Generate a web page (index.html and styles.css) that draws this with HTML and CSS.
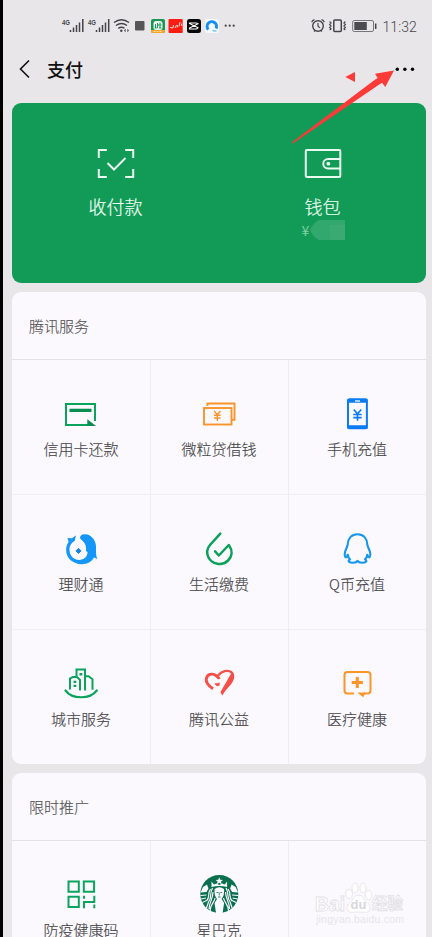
FILE: index.html
```html
<!DOCTYPE html>
<html lang="zh-CN">
<head>
<meta charset="utf-8">
<title>支付</title>
<link rel="stylesheet" href="styles.css">
</head>
<body>
<div class="screen">
  <div class="status">
    <svg class="status-left" width="180" height="24" viewBox="60 14 180 24">
      <g class="net"><text x="62" y="24.500" textLength="8" lengthAdjust="spacingAndGlyphs">4G</text><text x="88" y="24.500" textLength="8" lengthAdjust="spacingAndGlyphs">4G</text></g>
      <g stroke="#444347" stroke-width="1.500">
        <path d="M70.500 32v-2M73.500 32v-4.500M76.500 32v-7M79.500 32v-9.500M82.800 32v-13"/>
        <path d="M96.500 32v-2M99.500 32v-4.500M102.500 32v-7M105.500 32v-9.500M108.700 32v-13"/>
      </g>
      <g fill="none" stroke="#444347" stroke-width="1.400">
        <path d="M114 22.500q7.500-5.500 15 0M116 25.500q5.500-4 11 0M118.300 28.300q3.200-2.200 6.200 0"/>
      </g>
      <circle cx="121.300" cy="30.800" r="1.200" fill="#444347"/>
      <path d="M124 30.500l1.600-1.800v3.600zM129 30.500l-1.600-1.800v3.600z" fill="#444347"/>
      <rect x="135" y="21" width="9.500" height="9.500" rx="1" fill="#565558"/>
      <rect x="151" y="19" width="14" height="14" rx="2" fill="#1b9652"/>
      <path d="M151 30h14v1q0 2-2 2h-10q-2 0-2-2z" fill="#f5a52c"/>
      <rect x="153.500" y="21" width="9" height="9" rx="2.500" fill="#e9f8ee"/>
      <path d="M155.500 24v4M157.500 23v5M160 22.500v5.500M158 25h3.500M154.800 28h2M159 28h2.500" stroke="#1b9652" fill="none"/>
      <path d="M153.500 31.500h9" stroke="#fff3cd" stroke-width=".8" stroke-dasharray="2 1"/>
      <rect x="168.500" y="19" width="14.200" height="14" rx="1" fill="#fb1c12"/>
      <path d="M170 27.500l3 .5.500-3M175 28l1.500-3M177 27.500l.8-2.500M179 26.500l1-4.500M181 23.500l1 2.500" stroke="#ffd5d1" fill="none"/>
      <rect x="187" y="19" width="14" height="14" rx="2.500" fill="#08080a"/>
      <path d="M198.500 23.500l-9 4.500v1h7q1 0 1-1.200M189.500 23.500l9 4.500M189.500 24v-1h7q1 0 1 1" stroke="#fff" stroke-width="1.200" fill="none"/>
      <rect x="205" y="19" width="14" height="14" rx="2.500" fill="#f3f9fe"/>
      <path d="M208.300 29.500a4.700 4.700 0 1 1 7.700-1" stroke="#168df0" stroke-width="3" fill="none"/>
      <path d="M212.500 30q1.500 1.500 4 .8" stroke="#7cc9fa" stroke-width="1.500" fill="none"/>
      <g fill="#444347"><circle cx="225.700" cy="25.700" r="1.100"/><circle cx="229.700" cy="25.700" r="1.100"/><circle cx="233.700" cy="25.700" r="1.100"/></g>
    </svg>
    <div class="status-right">
      <svg width="68" height="20" viewBox="310 16 68 20" fill="none" stroke="#444347">
        <circle cx="319" cy="26" r="5.300" stroke-width="1.400"/>
        <path d="M319 23v3.200l2 1.700M312.700 22.300q.7-2.200 2.800-2.700M325.300 22.300q-.7-2.200-2.800-2.700M315 31.500l1.200-1.300M323 31.500l-1.200-1.300" stroke-width="1.200"/>
        <rect x="334.800" y="20" width="7.500" height="11.500" rx="1" stroke-width="1.500"/>
        <path d="M330.600 21.500l1.500 1.500-1.500 1.500 1.500 1.500-1.500 1.500 1.500 1.500-1.500 1M346.400 21.500l-1.500 1.500 1.500 1.500-1.500 1.500 1.500 1.500-1.500 1.500 1.500 1" stroke-width="1.100"/>
        <rect x="353.700" y="20.500" width="20.800" height="11" rx="1.500" stroke="#77767a"/>
        <path d="M355.300 22h12.500v8h-12.500z" fill="#4c4b4f" stroke="none"/>
        <path d="M376.700 23.500v5.500" stroke-width="1.500"/>
      </svg>
      <span class="clock">11:32</span>
    </div>
  </div>

  <header class="nav">
    <svg width="12" height="20" viewBox="0 0 12 20" fill="none" stroke="#111" stroke-width="1.600"><path d="M11 1.500L2.500 10l8.500 8.500"/></svg>
    <h1>支付</h1>
    <svg class="more" width="20" height="6" viewBox="0 0 20 6"><circle cx="2.300" cy="3.200" r="1.700"/><circle cx="9.900" cy="3.200" r="1.700"/><circle cx="17.500" cy="3.200" r="1.700"/></svg>
  </header>

  <main>
    <section class="hero">
      <div class="hero-item">
        <svg class="icon" viewBox="0 0 40 40" fill="none" stroke="#e9faf0" stroke-width="2">
          <path d="M2.800 15V7h8M29.200 7h8v8M37.200 26v8h-8M10.800 34h-8v-8"/><path d="M11.500 20l6.500 6.500L29.500 15"/>
        </svg>
        <span class="hero-label">收付款</span>
      </div>
      <div class="hero-item">
        <svg class="icon" viewBox="0 0 40 40" fill="none" stroke="#e9faf0" stroke-width="2">
          <rect x="2.800" y="7" width="34.500" height="27" rx="1"/><path d="M37 16H25a4.700 4.700 0 0 0 0 9.500h12"/><circle cx="25.300" cy="20.700" r="1.900" fill="#e9faf0" stroke="none"/>
        </svg>
        <span class="hero-label">钱包</span>
        <div class="balance"><span>¥</span><svg width="35" height="20" viewBox="0 0 35 20"><path d="M9 0h26v20H9Q3 17 0 10 3 3 9 0z" fill="#32a86e"/><path d="M20 5h15v15H20z" fill="#3aaa72"/></svg></div>
      </div>
    </section>

    <section class="card">
      <h2>腾讯服务</h2>
      <div class="grid">
        <div class="cell">
          <svg class="icon" viewBox="0 0 40 40"><path d="M34 27V10H5v21h22" fill="none" stroke="#0aa35c" stroke-width="2"/><path d="M8.500 14.700h22v3.200h-22z" fill="#078d4d"/><path d="M26.300 25.300L35 32h-8.700z" fill="#078d4d"/></svg>
          <span>信用卡还款</span>
        </div>
        <div class="cell">
          <svg class="icon" viewBox="0 0 40 40" fill="none" stroke="#fa9429" stroke-width="1.900"><rect x="5" y="14" width="27.500" height="16.500"/><path d="M8.500 12V9.500h27v16.300H33"/><path d="M15.200 17l3.100 3.700 3.100-3.700M18.300 20.700V27M15 21.300h6.600M15 24h6.600" stroke-width="1.400"/></svg>
          <span>微粒贷借钱</span>
        </div>
        <div class="cell">
          <svg class="icon" viewBox="0 0 40 40" fill="none" stroke="#0b7bf5"><rect x="11" y="5.300" width="18.900" height="29" rx="1.500" stroke-width="2"/><path d="M10.500 7h20M10.500 33h20" stroke-width="3.500"/><path d="M18 7h5" stroke="#d9ecff" stroke-width="1.500"/><path d="M16.700 15.500l3.800 4.300 3.800-4.300M20.500 19.800v7M16.300 20.500h8.400M16.300 23.600h8.400" stroke-width="1.600"/></svg>
          <span>手机充值</span>
        </div>
        <div class="cell">
          <svg class="icon" viewBox="0 0 40 40"><path d="M6.500 9l4.500.3L15.500 6 20 7.500q5-4 9.500-.5c4 3 6 7.500 5.500 13 0 4 0 7 1.300 10l-3.300-1.500C30.500 33 26 35.300 20.700 35.200 12 35 5.200 29.500 5.100 21c0-3.500 1-6 2.500-8z" fill="#1496fa"/><path d="M15.500 3.500l-1.700 8.200c-4 2.500-5.800 6-5.200 10.500.7 5.300 4.700 8.800 9.500 8.700 4.700-.1 8.300-3.200 8.500-7.700l-1.700-1.500c1-5-1.400-8.700-5.600-12V3.500z" fill="#fbf9fd"/><path d="M19.500 9q-.5-3 3-3.800L28 7l-5 6z" fill="#1496fa"/><path d="M17.500 19.300l2.500 2.600-2.500 2.600-2.500-2.600z" fill="#1685e0" stroke="#1685e0"/></svg>
          <span>理财通</span>
        </div>
        <div class="cell">
          <svg class="icon" viewBox="0 0 40 40" fill="none" stroke="#0ba15b" stroke-width="2.500" stroke-linejoin="round" stroke-linecap="round"><path d="M21.300 4.700L11 16C8 19.500 7.500 24 9.300 28c3.300 7.300 14 9.300 19.800 3.500 4.200-4.200 4.700-10 .7-15.500l-10 10.500-3.700-4.200"/></svg>
          <span>生活缴费</span>
        </div>
        <div class="cell">
          <svg class="icon" viewBox="0 0 40 40" fill="none" stroke="#1496ee" stroke-width="2.100" stroke-linejoin="round"><path d="M20.500 5.200c-6 0-9.700 4.300-9.800 10.300 0 2.200-2.900 5.500-3 9.500 0 3 1 4.500 2.300 2.500l.8-1.700c.3 2.200 1.300 3.700 2.200 4.500-3 1.700-.7 3.500 3 3.500 2.200 0 3.700-.6 4.500-2 .8 1.400 2.300 2 4.500 2 3.700 0 6-1.800 3-3.500.9-.8 1.900-2.300 2.200-4.500l.8 1.700c1.300 2 2.300.5 2.300-2.500-.1-4-3-7.300-3-9.500-.1-6-3.800-10.300-9.800-10.300z"/></svg>
          <span>Q币充值</span>
        </div>
        <div class="cell">
          <svg class="icon" viewBox="0 0 40 40" fill="none" stroke="#0ba45d" stroke-width="2"><path d="M9 25.500V14.300l3-1.300h4l3 3v10.500M15.500 13V5.500H24v21M24 12.300h3.500l4 3v10.500"/><path d="M4.500 26.500c6.500 9 24.500 9 31.300 0" stroke-linecap="round" stroke-width="2.200"/><path d="M12.500 16.800h2.800v2.200h-2.800zM12.500 20.800h2.800v2.200h-2.800zM18.500 9h2.800v2.500h-2.800z" fill="#0ba45d" stroke="none"/></svg>
          <span>城市服务</span>
        </div>
        <div class="cell">
          <svg class="icon" viewBox="0 0 40 40" fill="none" stroke="#f64f48"><path d="M14 24.800C9 21.500 6.800 18.700 7.300 15c.6-4.700 6-6.200 9.700-3.500 1.500 1 2.600 2 3.300 3.500" stroke-width="2.900"/><path d="M19 11.500C22.500 7 29 5.500 32.500 8.300c3.300 3 .8 8.700-2.500 12.200-2.500 2.700-5 4.500-6.800 8.500" stroke-width="2.400"/><path d="M33 8c3.500 4.500 1.500 9-1.500 12.700-3 3.700-6.500 6.500-8.200 11L21.500 28z" fill="#f64f48" stroke="none"/><path d="M16 19l2.500.3 2-1 .2 3.200-2.600.7-1.800-1.200z" fill="#f64f48" stroke="none"/></svg>
          <span>腾讯公益</span>
        </div>
        <div class="cell">
          <svg class="icon" viewBox="0 0 40 40" fill="none" stroke="#fb952a" stroke-width="2"><path d="M17 29.500h-6.500q-3-.2-3-3V11q0-3 3-3h20q3 0 3 3v15.500q0 3-3 3H27"/><path d="M20.300 28.500h8.200l-2.300 4.800z" fill="#fb952a" stroke="none"/><path d="M20.300 13v11M14.700 18.500h11.200" stroke-width="3"/></svg>
          <span>医疗健康</span>
        </div>
      </div>
    </section>

    <section class="card promo">
      <h2>限时推广</h2>
      <div class="grid">
        <div class="cell">
          <svg class="icon" viewBox="0 0 40 40" fill="none" stroke="#0ba45d" stroke-width="2"><path d="M7.500 6.500h10.300v10.300H7.500zM22.800 6.500h10.300v10.300H22.800zM7.500 21.800h10.300v10.300H7.500z"/><path d="M23 20.800v3M23 26v7.200M33.300 20.800v7M33.300 29.500v3.700M23 27h11"/></svg>
          <span>防疫健康码</span>
        </div>
        <div class="cell">
          <svg class="icon" viewBox="0 0 40 40"><circle cx="20.300" cy="19" r="19" fill="#096f4c"/><g fill="#fbf9fd"><path d="M20.300 2.200l1.100 2.500 2.600.2-2 1.700.7 2.600-2.400-1.400-2.400 1.400.7-2.600-2-1.700 2.600-.2zM12.500 6.500l2.500 3 2.500-1 2.800 1.500 2.800-1.500 2.500 1 2.500-3v5.500q-7.500-2-15.600 0zM4 12l4-2.500 1.500 4L7.500 17l-6 .5zM36.600 12l-4-2.500-1.500 4 2 3.500 6 .5z"/><path d="M15.500 14q4.800-3.500 9.600 0c.2 5-.6 8-2.500 10l2.500 4-1.500 10h-6.600l-1.500-10 2.500-4c-1.900-2-2.700-5-2.500-10z"/></g><g fill="none" stroke="#fbf9fd" stroke-width="1.200"><path d="M13.500 13c-3.500 6.500 0 9-4 14l-2 6M11.500 14c-3.500 5 0 8-4 12M16 23c0 4-5 6-5 13M14 17c0 8-4 10-4 17M27.100 13c3.500 6.500 0 9 4 14l2 6M29.100 14c3.500 5 0 8 4 12M24.600 23c0 4 5 6 5 13M26.600 17c0 8 4 10 4 17"/><path d="M1.500 20.500l6-.5M2 24l5-1M3.500 27.500l4-2M39.100 20.500l-6-.5M38.600 24l-5-1M37.100 27.500l-4-2"/></g><path d="M17.500 17.500h2M21.200 17.500h2M20.300 17.500v3M19 22h2.600" fill="none" stroke="#096f4c" stroke-width=".8"/></svg>
          <span>星巴克</span>
        </div>
        <div class="cell"></div>
      </div>
    </section>
  </main>

  <svg class="arrow" width="104" height="76" viewBox="291 69 104 76" fill="#fc3a38"><path d="M292 142.200L374.500 80l3.200-2-2.700-4.300 19-3.200-8.700 16.500-3.300-4.300-3.500 2.300L292.800 143.500z"/><path d="M345.300 77l9.700-5v10z"/></svg>

  <svg class="watermark" width="96" height="48" viewBox="312 880 96 48">
    <g class="mark">
      <text x="315" y="911" font-size="20" textLength="30" lengthAdjust="spacingAndGlyphs">Bai</text>
      <path d="M347 908c0-5 5-6 6-9 2-5 9-5 11 0 1 3 6 4 6 9 0 6-6 4-11.500 4S347 914 347 908z"/>
      <ellipse cx="349" cy="894" rx="3.300" ry="4.500"/><ellipse cx="355" cy="888" rx="3" ry="4.700"/><ellipse cx="363" cy="888" rx="3" ry="4.700"/><ellipse cx="368.500" cy="895" rx="3.300" ry="4.500"/>
      <text x="372" y="909" font-size="15.500" textLength="31" class="cjk">经验</text>
    </g>
    <text x="350.500" y="909" class="du">du</text>
    <text x="316" y="923" class="url" textLength="88">jingyan.baidu.com</text>
  </svg>
</div>
</body>
</html>
```
FILE: styles.css
```css
* { box-sizing: border-box; }

html, body { margin: 0; height: 937px; overflow: hidden; }

body { font-family: "Noto Sans CJK SC", sans-serif; font-weight: 300; }

.screen {
  position: relative;
  width: 432px;
  height: 937px;
  overflow: hidden;
  border-left: 3px solid #000;
  background: #e8e6e9;
  color: #454448;
}

svg { display: block; flex: none; }

.status {
  display: flex;
  justify-content: space-between;
  align-items: center;
  height: 52px;
  padding: 0 15px 0 57px;
}

.net { font: 700 7.5px "Liberation Sans", sans-serif; fill: #444347; }

.status-right { display: flex; align-items: center; gap: 5px; }

.clock { font: 300 14px/20px Roboto, sans-serif; letter-spacing: .1px; white-space: nowrap; padding-top: 1px; }

.nav {
  display: flex;
  align-items: center;
  height: 51px;
  padding: 0 17px 17px 15px;
}

.nav h1 {
  margin: -1px 0 0 17px;
  font-size: 18px;
  line-height: 26px;
  font-weight: 500;
  color: #111;
}

.more { margin-left: auto; }

main { display: flex; flex-direction: column; gap: 9px; padding: 0 6px 0 9px; }

.hero {
  display: grid;
  grid-template-columns: 1fr 1fr;
  height: 180px;
  padding-top: 40px;
  border-radius: 9px;
  background: #129b57;
}

.hero-item { display: flex; flex-direction: column; align-items: center; }

.icon { width: 40px; height: 40px; }

.hero-label {
  margin: 10px 0 1px;
  font-size: 18px;
  line-height: 26px;
  color: #effcf4;
  -webkit-text-stroke: .2px #effcf4;
}

.balance {
  display: flex;
  align-items: center;
  gap: 1px;
  height: 20px;
  padding-left: 2px;
  font-size: 14px;
  font-weight: 400;
  color: #84cda5;
}

.card { border-radius: 9px; background: #fbf9fd; overflow: hidden; flex: none; }

.card h2 {
  height: 68px;
  margin: 0;
  padding-left: 17px;
  border-bottom: 1px solid #e3e1e5;
  font-size: 15px;
  line-height: 67px;
  font-weight: 300;
  color: #555458;
  -webkit-text-stroke: .15px #555458;
}

.grid { display: grid; grid-template-columns: repeat(3, 138px); grid-auto-rows: 135px; }

.card:not(.promo) .grid { height: 404px; }

.cell {
  display: flex;
  flex-direction: column;
  align-items: center;
  gap: 5px;
  padding: 34px 1px 0 0;
  border-left: 1px solid #eeecf0;
  border-bottom: 1px solid #f0eef2;
  font-size: 15px;
  line-height: 20px;
  -webkit-text-stroke: .15px #454448;
}

.cell:nth-child(3n + 1) { border-left-color: transparent; }

.arrow { position: absolute; left: 288px; top: 69px; }

.watermark { position: absolute; left: 309px; top: 880px; }

.mark { fill: #fff; stroke: #e2e0e4; stroke-width: .8; font-family: "Liberation Sans", sans-serif; font-weight: 700; }

.mark .cjk { font-family: "Noto Sans CJK SC", sans-serif; }

.du { font: 700 13px "Liberation Sans", sans-serif; fill: #d9d7db; }

.url { font: 400 10.5px "Liberation Sans", sans-serif; fill: #e7e5e9; }
```
